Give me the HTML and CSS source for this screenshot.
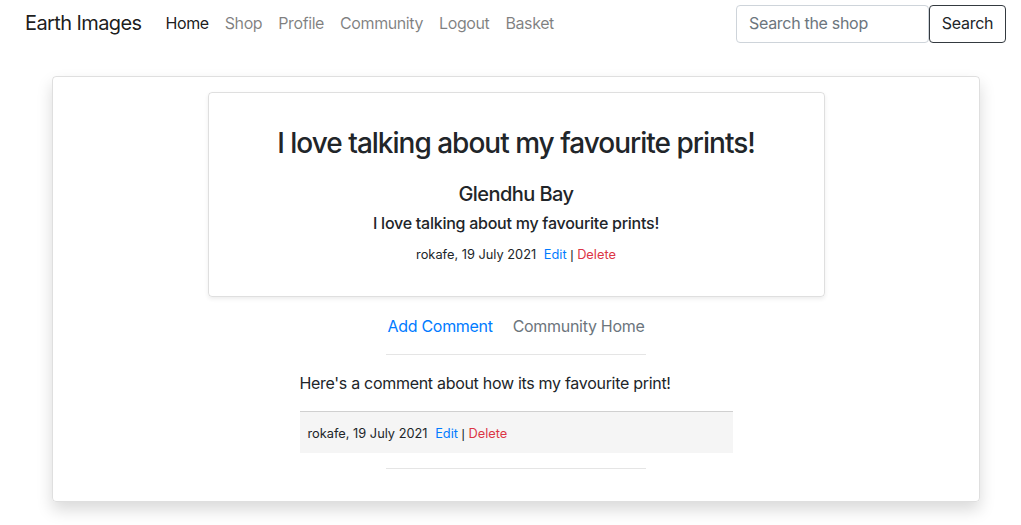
FILE: index.html
```html
<!DOCTYPE html>
<html lang="en">
<head>
<meta charset="utf-8">
<title>Earth Images</title>
<link rel="stylesheet" href="styles.css">
</head>
<body>
<nav class="navbar">
  <a class="brand" href="#">Earth Images</a>
  <ul class="nav-links">
    <li><a class="nav-link active" href="#">Home</a></li>
    <li><a class="nav-link" href="#">Shop</a></li>
    <li><a class="nav-link" href="#">Profile</a></li>
    <li><a class="nav-link" href="#">Community</a></li>
    <li><a class="nav-link" href="#">Logout</a></li>
    <li><a class="nav-link" href="#">Basket</a></li>
  </ul>
  <form class="search">
    <input class="search-input" type="text" placeholder="Search the shop">
    <button class="search-btn" type="button">Search</button>
  </form>
</nav>
<main class="wrapper">
  <section class="outer-card">
    <div class="post-card">
      <h3 class="post-title">I love talking about my favourite prints!</h3>
      <h5 class="print-name">Glendhu Bay</h5>
      <h6 class="post-body">I love talking about my favourite prints!</h6>
      <p class="meta"><small>rokafe, 19 July 2021 <a class="edit" href="#">Edit</a> <span class="sep">|</span> <a class="delete" href="#">Delete</a></small></p>
    </div>
    <div class="actions">
      <a class="action primary" href="#">Add Comment</a>
      <a class="action muted" href="#">Community Home</a>
    </div>
    <hr class="rule">
    <div class="comment">
      <p class="comment-text">Here's a comment about how its my favourite print!</p>
      <div class="comment-footer"><small>rokafe, 19 July 2021 <a class="edit" href="#">Edit</a> <span class="sep">|</span> <a class="delete" href="#">Delete</a></small></div>
    </div>
    <hr class="rule">
  </section>
</main>
</body>
</html>
```
FILE: styles.css
```css
* { box-sizing: border-box; }
html, body { margin: 0; padding: 0; }
body {
  font-family: "Inter", "Liberation Sans", sans-serif;
  font-size: 16px;
  line-height: 1.5;
  letter-spacing: -0.3px;
  color: #212529;
  background: #fff;
}
a { text-decoration: none; }

.navbar {
  display: flex;
  align-items: center;
  height: 47px;
  padding: 0 15px 0 25px;
}
.brand {
  font-size: 20px;
  letter-spacing: -0.6px;
  color: rgba(0,0,0,.9);
  margin-right: 16px;
  line-height: 30px;
  padding-bottom: 2px;
}
.nav-links {
  display: flex;
  list-style: none;
  margin: 0;
  padding: 0;
  flex: 1;
}
.nav-link {
  display: block;
  padding: 7px 8px 9px;
  letter-spacing: -0.4px;
  color: rgba(0,0,0,.5);
}
.nav-link.active { color: rgba(0,0,0,.9); }
.search { display: flex; }
.search-input {
  width: 193px;
  height: 38px;
  padding: 5px 12px 7px;
  font: inherit;
  letter-spacing: -0.3px;
  color: #495057;
  border: 1px solid #ced4da;
  border-radius: 4px;
}
.search-input::placeholder { color: #6c757d; }
.search-btn {
  height: 38px;
  width: 77px;
  padding: 0 0 2px;
  font: inherit;
  letter-spacing: -0.3px;
  color: #212529;
  background: #fff;
  border: 1px solid #343a40;
  border-radius: 4px;
}

.wrapper { padding: 29px 41px 30px 52px; }
.outer-card {
  border: 1px solid rgba(0,0,0,.125);
  border-radius: 4px;
  box-shadow: 0 8px 16px rgba(0,0,0,.15);
  padding: 15px 0 32px;
  display: flex;
  flex-direction: column;
  align-items: center;
}
.post-card {
  width: 617px;
  border: 1px solid rgba(0,0,0,.125);
  border-radius: 4px;
  box-shadow: 0 2px 4px rgba(0,0,0,.075);
  padding: 34px 16px 0;
  text-align: center;
}
.post-title {
  margin: 0 0 21px;
  font-size: 28px;
  letter-spacing: -1px;
  font-weight: 500;
  line-height: 1.2;
}
.print-name {
  margin: 0 0 8px;
  font-size: 20px;
  letter-spacing: -0.55px;
  font-weight: 500;
  line-height: 1.2;
}
.post-body {
  margin: 0 0 8px;
  font-size: 16px;
  letter-spacing: -0.25px;
  font-weight: 500;
  line-height: 1.2;
}
.meta { margin: 0 0 31px; }
small { font-size: 12.8px; letter-spacing: 0; }
.edit { color: #007bff; margin-left: 4px; }
.delete { color: #dc3545; }
.sep { color: #212529; font-family: "Liberation Sans", sans-serif; }

.actions {
  display: flex;
  margin-top: 9px;
}
.action { padding: 8px 10px; }
.primary { color: #007bff; }
.muted { color: #6c757d; }

.rule {
  width: 260px;
  margin: 8px 0 16px;
  border: 0;
  border-top: 1px solid rgba(0,0,0,.1);
}
.comment { width: 433px; }
.comment-text { margin: 0 0 16px; }
.comment-footer {
  background: #f5f5f5;
  border-top: 1px solid rgba(0,0,0,.15);
  padding: 10px 8px 9px;
  line-height: 20px;
}
.comment + .rule { margin: 15px 0 0; }
```
